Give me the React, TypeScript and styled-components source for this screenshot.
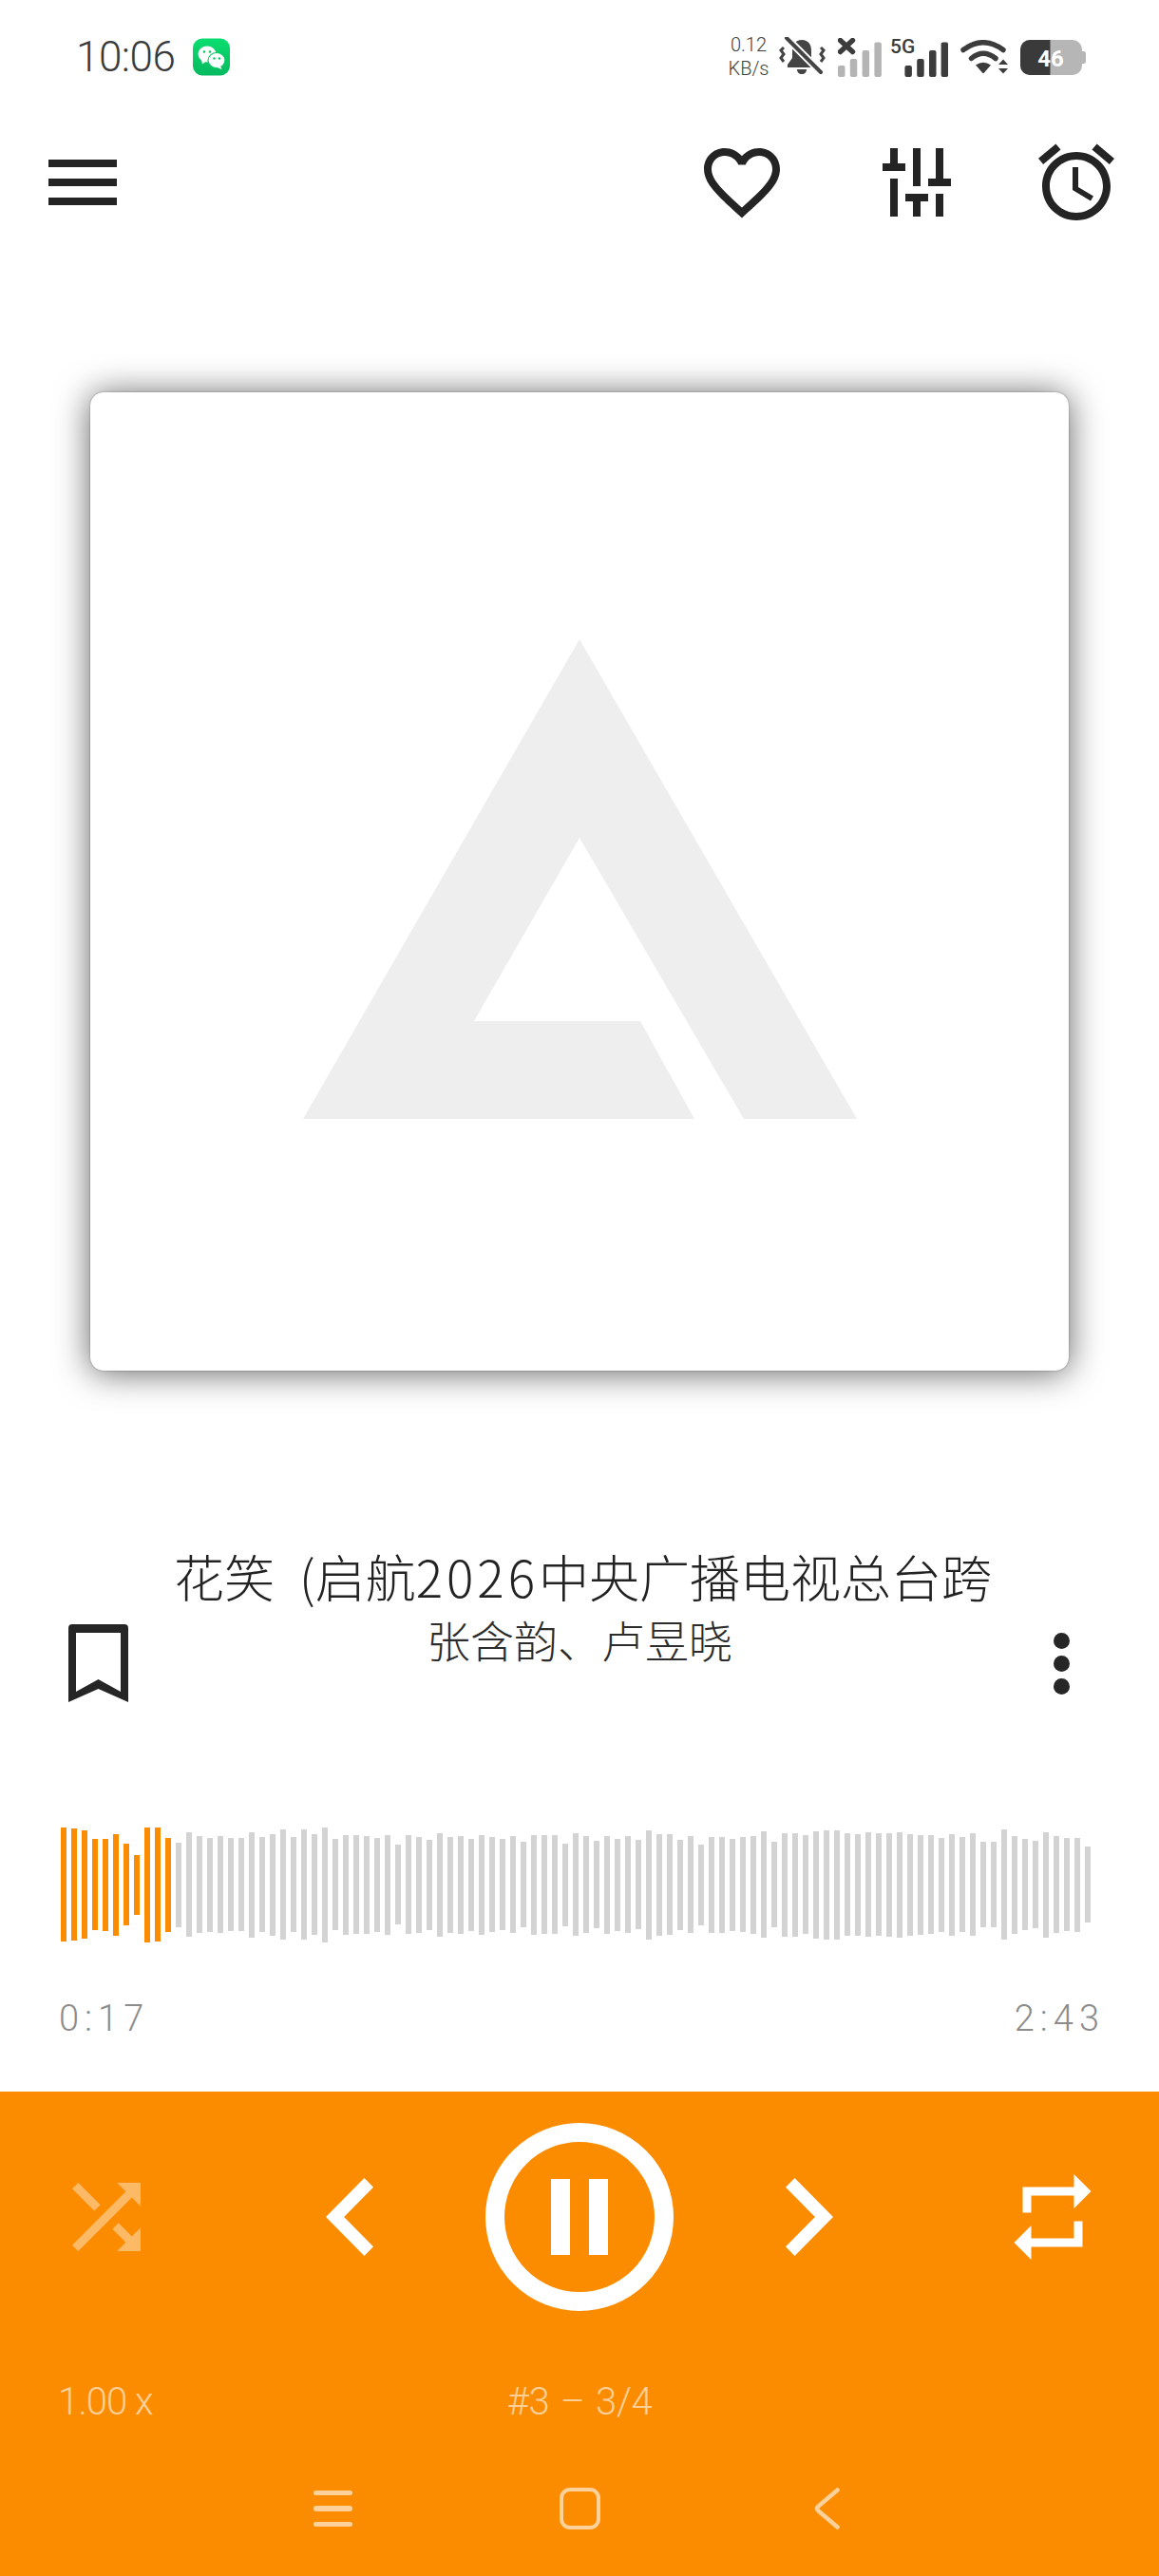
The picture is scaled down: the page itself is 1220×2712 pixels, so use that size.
import React from 'react';
import styled, { createGlobalStyle } from 'styled-components';

const GlobalStyle = createGlobalStyle`
  html, body {
    margin: 0;
    padding: 0;
    background: #fff;
  }
  body {
    font-family: Roboto, "Noto Sans CJK SC", sans-serif;
  }
`;

const Page = styled.div`
  width: 1220px;
  height: 2712px;
  overflow: hidden;
  background: #fff;
  display: flex;
  flex-direction: column;
`;

const StatusBar = styled.div`
  height: 120px;
  padding: 0 77px 0 80px;
  display: flex;
  align-items: center;
  justify-content: space-between;
`;

const StatusLeft = styled.div`
  display: flex;
  align-items: center;
  gap: 19px;
`;

const Clock = styled.span`
  font-size: 44px;
  font-weight: 300;
  letter-spacing: -0.5px;
  color: #3a3a3a;
  line-height: 1;
`;

const StatusRight = styled.div`
  display: flex;
  align-items: center;
  gap: 13px;
  height: 44px;
`;

const Speed = styled.div`
  width: 38px;
  display: flex;
  flex-direction: column;
  align-items: center;
  font-size: 20px;
  font-weight: 300;
  line-height: 25px;
  color: #3f3f3f;
  white-space: nowrap;
`;

const StatusIcon = styled.svg`
  display: block;
  flex: none;
`;

const FiveGWrap = styled.div`
  position: relative;
  width: 61px;
  height: 41px;
  margin-left: -4px;
`;

const FiveGLabel = styled.span`
  position: absolute;
  left: 0;
  top: -3px;
  font-size: 21px;
  line-height: 24px;
  font-weight: 500;
  color: #3c3c3c;
`;

const Toolbar = styled.div`
  margin-top: 24px;
  height: 96px;
  padding: 0 39px;
  display: flex;
  align-items: center;
`;

const ToolIcon = styled.svg<{ $gap?: number }>`
  display: block;
  flex: none;
  width: 96px;
  height: 96px;
  fill: #242424;
  margin-left: ${(p) => p.$gap ?? 0}px;
`;

const Spacer = styled.div`
  flex: 1;
`;

const Album = styled.div`
  margin: 173px 95px 0;
  height: 1030px;
  box-sizing: border-box;
  padding-bottom: 5px;
  background: #fff;
  border-radius: 14px;
  box-shadow: 0 0 1.5px rgba(0, 0, 0, 0.55), 0 2px 36px rgba(0, 0, 0, 0.62);
  display: flex;
  align-items: center;
  justify-content: center;
`;

const Info = styled.div`
  margin-top: 186px;
  display: grid;
  grid-template-columns: 1fr auto 1fr;
  row-gap: 21px;
`;

const Title = styled.div`
  grid-column: 1 / 4;
  text-align: center;
  padding-left: 7px;
  font-family: "Noto Sans CJK SC", sans-serif;
  font-size: 53px;
  font-weight: 300;
  line-height: 60px;
  color: #222;
  white-space: nowrap;
`;

const TitleParen = styled.span`
  margin-left: 26px;
`;

const TitleDigits = styled.span`
  letter-spacing: 4px;
`;

const Artist = styled.div`
  font-family: "Noto Sans CJK SC", sans-serif;
  font-size: 46px;
  font-weight: 300;
  line-height: 42px;
  color: #2c2c2c;
  white-space: nowrap;
  margin-top: -6px;
`;

const BookmarkCell = styled.div`
  padding-left: 72px;
`;

const BookmarkIcon = styled.svg`
  display: block;
  fill: #262626;
`;

const MoreCell = styled.div`
  display: flex;
  flex-direction: column;
  align-items: flex-end;
  gap: 7px;
  padding: 9px 94px 0 0;
`;

const Dot = styled.span`
  width: 17px;
  height: 17px;
  border-radius: 50%;
  background: #262626;
`;

const Wave = styled.div`
  margin-top: 131px;
  height: 122px;
  padding-left: 64px;
  display: flex;
  align-items: center;
  gap: 5px;
`;

const WaveBar = styled.span<{ $played: boolean }>`
  width: 6px;
  flex: none;
  background: ${(p) => (p.$played ? '#fb8c00' : '#d3d3d3')};
`;

const Times = styled.div`
  margin-top: 58px;
  height: 44px;
  padding: 0 57px 0 62px;
  display: flex;
  align-items: center;
  justify-content: space-between;
  font-size: 38px;
  font-weight: 300;
  letter-spacing: 6px;
  color: #8c8c8c;
`;

const Panel = styled.div`
  margin-top: 55px;
  flex: 1;
  background: #fb8c00;
  padding-top: 33px;
  display: flex;
  flex-direction: column;
`;

const Controls = styled.div`
  height: 198px;
  padding: 0 58px;
  display: flex;
  align-items: center;
  justify-content: space-between;
`;

const ModeIcon = styled.svg<{ $dim?: boolean }>`
  display: block;
  width: 108px;
  height: 108px;
  fill: ${(p) => (p.$dim ? 'rgba(255, 255, 255, 0.4)' : '#fff')};
`;

const Transport = styled.div`
  display: flex;
  align-items: center;
  gap: 118px;
`;

const Chevron = styled.svg`
  display: block;
  width: 50px;
  height: 82px;
  fill: #fff;
`;

const PauseRing = styled.div`
  width: 198px;
  height: 198px;
  box-sizing: border-box;
  border: 20px solid #fff;
  border-radius: 50%;
  display: flex;
  align-items: center;
  justify-content: center;
  gap: 20px;
`;

const PauseBar = styled.span`
  width: 20px;
  height: 80px;
  background: #fff;
`;

const Meta = styled.div`
  margin-top: 71px;
  height: 48px;
  padding-left: 61px;
  display: grid;
  grid-template-columns: 1fr 300px 1fr;
  align-items: center;
  margin-right: 61px;
  font-size: 40px;
  font-weight: 300;
  color: rgba(255, 255, 255, 0.6);
`;

const Speedometer = styled.span`
  letter-spacing: -1px;
  white-space: nowrap;
`;

const Position = styled.span`
  text-align: center;
  white-space: nowrap;
  word-spacing: 2px;
  letter-spacing: -0.3px;
`;

const NavBar = styled.div`
  margin-top: 67px;
  height: 44px;
  display: flex;
  justify-content: center;
`;

const NavSlot = styled.div`
  width: 260px;
  display: flex;
  align-items: center;
  justify-content: center;
`;

const NavLines = styled.div`
  width: 41px;
  display: flex;
  flex-direction: column;
  gap: 11px;
`;

const NavLine = styled.span`
  height: 5.5px;
  border-radius: 3px;
  background: rgba(255, 255, 255, 0.6);
`;

const NavSquare = styled.div`
  width: 43px;
  height: 44px;
  box-sizing: border-box;
  border: 4.5px solid rgba(255, 255, 255, 0.6);
  border-radius: 11px;
`;

const played = 11;
const bars = [
  120, 118, 114, 96, 97, 107, 86, 63, 121, 120, 99, 89, 110, 102, 99, 102, 98, 98, 111, 100,
  107, 116, 100, 116, 106, 121, 96, 105, 104, 103, 99, 105, 84, 104, 101, 95, 109, 101, 103, 97,
  105, 100, 96, 102, 90, 105, 104, 104, 87, 108, 102, 92, 103, 97, 102, 94, 115, 107, 106, 95,
  102, 85, 101, 101, 97, 100, 103, 112, 90, 109, 109, 104, 113, 115, 115, 108, 107, 110, 108, 109,
  111, 107, 105, 104, 99, 107, 100, 108, 90, 90, 116, 103, 96, 92, 111, 102, 98, 99, 80,
];

const WeChatIcon = () => (
  <StatusIcon width="39" height="46" viewBox="0 0 39 46">
    <defs>
      <linearGradient id="wechat" x1="0" y1="0" x2="0" y2="1">
        <stop offset="0" stopColor="#0ade70" />
        <stop offset="1" stopColor="#07b95f" />
      </linearGradient>
    </defs>
    <rect y="0" width="39" height="39" rx="10" fill="url(#wechat)" transform="translate(0 3.5)" />
    <g transform="translate(0 3.5)">
      <ellipse cx="15" cy="16.5" rx="9.5" ry="8.5" fill="#fff" />
      <path d="M9 22l1 5 4-3z" fill="#fff" />
      <ellipse cx="25" cy="23" rx="9" ry="8" fill="#fff" stroke="#08c866" strokeWidth="1.2" />
      <path d="M29 29l1.5 3.5-5-2z" fill="#fff" />
      <circle cx="12" cy="14" r="1.3" fill="#08c866" />
      <circle cx="18" cy="14" r="1.3" fill="#08c866" />
      <circle cx="22.5" cy="21" r="1.2" fill="#08c866" />
      <circle cx="28" cy="21" r="1.2" fill="#08c866" />
    </g>
  </StatusIcon>
);

const BellIcon = () => (
  <StatusIcon width="49" height="42" viewBox="0 0 49 42">
    <path d="M24 3c-7 0-10 5-10 11v8l-5 7v3h30v-3l-5-7v-8c0-6-3-11-10-11z" fill="#444" />
    <path d="M19 34h10c0 3-2 5-5 5s-5-2-5-5z" fill="#444" />
    <path d="M5 11l-3 3 3 4-3 4 3 4" fill="none" stroke="#444" strokeWidth="3" />
    <path d="M44 11l3 3-3 4 3 4-3 4" fill="none" stroke="#444" strokeWidth="3" />
    <path d="M8 1l36 36" stroke="#fff" strokeWidth="8" />
    <path d="M8 1l36 36" stroke="#444" strokeWidth="4" strokeLinecap="round" />
  </StatusIcon>
);

const MutedSignal = () => (
  <StatusIcon width="46" height="41" viewBox="0 0 46 41">
    <rect x="0" y="29" width="7.5" height="12" rx="2" fill="#b4b4b4" />
    <rect x="12.8" y="22" width="7.5" height="19" rx="2" fill="#b4b4b4" />
    <rect x="25.6" y="13" width="7.5" height="28" rx="2" fill="#b4b4b4" />
    <rect x="38.4" y="4.5" width="7.5" height="36.5" rx="2" fill="#b4b4b4" />
    <path d="M2.5 2.5l13 12M15.5 2.5l-13 12" stroke="#3c3c3c" strokeWidth="5.5" strokeLinecap="round" />
  </StatusIcon>
);

const FiveGSignal = () => (
  <FiveGWrap>
    <StatusIcon width="61" height="41" viewBox="0 0 61 41">
      <rect x="15.4" y="29" width="7.5" height="12" rx="2" fill="#3c3c3c" />
      <rect x="28.2" y="22" width="7.5" height="19" rx="2" fill="#3c3c3c" />
      <rect x="41" y="13" width="7.5" height="28" rx="2" fill="#3c3c3c" />
      <rect x="53.6" y="4.5" width="7.5" height="36.5" rx="2" fill="#3c3c3c" />
    </StatusIcon>
    <FiveGLabel>5G</FiveGLabel>
  </FiveGWrap>
);

const WifiIcon = () => (
  <StatusIcon width="50" height="36" viewBox="0 0 50 36">
    <path d="M3 10.5Q24-5 45 10.5" fill="none" stroke="#3c3c3c" strokeWidth="5.5" strokeLinecap="round" />
    <path d="M11.5 19.5Q24 9 37 19.5" fill="none" stroke="#3c3c3c" strokeWidth="5.5" strokeLinecap="round" />
    <path d="M16 26.5Q24 21 32 26.5L25 34.5q-1 1-2 0z" fill="#3c3c3c" />
    <path d="M45 20.5l5 5.5H40zM40 30h10l-5 5.5z" fill="#3c3c3c" />
  </StatusIcon>
);

const BatteryIcon = () => (
  <StatusIcon width="69" height="37" viewBox="0 0 69 37">
    <rect x="0" y="0" width="65" height="37" rx="10" fill="#b6b6b6" />
    <path d="M10 0H31.5V37H10A10 10 0 0 1 0 27V10A10 10 0 0 1 10 0z" fill="#3a3a3a" />
    <path d="M65 12h1.5a2.5 2.5 0 0 1 2.5 2.5v8a2.5 2.5 0 0 1-2.5 2.5H65z" fill="#b6b6b6" />
    <text x="32" y="28" textAnchor="middle" fontFamily="Roboto, sans-serif" fontSize="24" fontWeight="700" fill="#fff">46</text>
  </StatusIcon>
);

const App: React.FC = () => {
  return (
    <Page>
      <GlobalStyle />
      <StatusBar>
        <StatusLeft>
          <Clock>10:06</Clock>
          <WeChatIcon />
        </StatusLeft>
        <StatusRight>
          <Speed>
            <span>0.12</span>
            <span>KB/s</span>
          </Speed>
          <BellIcon />
          <MutedSignal />
          <FiveGSignal />
          <WifiIcon />
          <BatteryIcon />
        </StatusRight>
      </StatusBar>

      <Toolbar>
        <ToolIcon viewBox="0 0 24 24">
          <path d="M3 18h18v-2H3v2zm0-5h18v-2H3v2zm0-7v2h18V6H3z" />
        </ToolIcon>
        <Spacer />
        <ToolIcon viewBox="0 0 24 24">
          <path d="M16.5 3c-1.74 0-3.41.81-4.5 2.09C10.91 3.81 9.24 3 7.5 3 4.42 3 2 5.42 2 8.5c0 3.78 3.4 6.86 8.55 11.54L12 21.35l1.45-1.32C18.6 15.36 22 12.28 22 8.5 22 5.42 19.58 3 16.5 3zm-4.4 15.55l-.1.1-.11-.1C7.14 14.24 4 11.39 4 8.5 4 6.5 5.5 5 7.5 5c1.54 0 3.04.99 3.57 2.36h1.87C13.46 5.99 14.96 5 16.5 5c2 0 3.5 1.5 3.5 3.5 0 2.89-3.14 5.74-7.9 10.05z" />
        </ToolIcon>
        <ToolIcon viewBox="0 0 24 24" $gap={88}>
          <path d="M5 3h2v4H5zM3 7h6v2H3zM5 11h2v10H5zM11 3h2v10h-2zM9 15h6v2H9zM11 17h2v4h-2zM17 3h2v8h-2zM15 11h6v2h-6zM17 15h2v6h-2z" />
        </ToolIcon>
        <ToolIcon viewBox="0 0 24 24" $gap={72}>
          <path d="M22 5.72l-4.6-3.86-1.29 1.53 4.6 3.86L22 5.72zM7.88 3.39L6.6 1.86 2 5.71l1.29 1.53 4.59-3.85zM12.5 8H11v6l4.75 2.85.75-1.23-4-2.37V8zM12 4c-4.97 0-9 4.03-9 9s4.03 9 9 9 9-4.03 9-9-4.03-9-9-9zm0 16c-3.87 0-7-3.13-7-7s3.13-7 7-7 7 3.13 7 7-3.13 7-7 7z" />
        </ToolIcon>
      </Toolbar>

      <Album>
        <svg width="583" height="505" viewBox="0 0 583 505">
          <path d="M291 0L583 505H464L291 209L180 402H355L412 505H0z" fill="#eeeeee" />
        </svg>
      </Album>

      <Info>
        <Title>
          花笑<TitleParen>(</TitleParen>启航<TitleDigits>2026</TitleDigits>中央广播电视总台跨
        </Title>
        <BookmarkCell>
          <BookmarkIcon width="63" height="82" viewBox="0 0 63 82">
            <path fillRule="evenodd" d="M4 0H59Q63 0 63 4V82L31.5 68L0 82V4Q0 0 4 0zM8 9V71L31.5 58L55 71V9z" />
          </BookmarkIcon>
        </BookmarkCell>
        <Artist>张含韵、卢昱晓</Artist>
        <MoreCell>
          <Dot />
          <Dot />
          <Dot />
        </MoreCell>
      </Info>

      <Wave>
        {bars.map((h, i) => (
          <WaveBar key={i} $played={i < played} style={{ height: h }} />
        ))}
      </Wave>

      <Times>
        <span>0:17</span>
        <span>2:43</span>
      </Times>

      <Panel>
        <Controls>
          <ModeIcon $dim viewBox="0 0 24 24">
            <path d="M10.59 9.17L5.41 4 4 5.41l5.17 5.17 1.42-1.41zM14.5 4l2.04 2.04L4 18.59 5.41 20 17.96 7.46 20 9.5V4h-5.5zm.33 9.41l-1.41 1.41 3.13 3.13L14.5 20H20v-5.5l-2.04 2.04-3.13-3.13z" />
          </ModeIcon>
          <Transport>
            <Chevron viewBox="8 6 7.41 12" preserveAspectRatio="none">
              <path d="M15.41 7.41L14 6l-6 6 6 6 1.41-1.41L10.83 12z" />
            </Chevron>
            <PauseRing>
              <PauseBar />
              <PauseBar />
            </PauseRing>
            <Chevron viewBox="8.59 6 7.41 12" preserveAspectRatio="none">
              <path d="M10 6L8.59 7.41 13.17 12l-4.58 4.59L10 18l6-6z" />
            </Chevron>
          </Transport>
          <ModeIcon viewBox="0 0 24 24">
            <path d="M7 7h10v3l4-4-4-4v3H5v6h2V7zm10 10H7v-3l-4 4 4 4v-3h12v-6h-2v4z" />
          </ModeIcon>
        </Controls>

        <Meta>
          <Speedometer>1.00 x</Speedometer>
          <Position>#3 – 3/4</Position>
        </Meta>

        <NavBar>
          <NavSlot>
            <NavLines>
              <NavLine />
              <NavLine />
              <NavLine />
            </NavLines>
          </NavSlot>
          <NavSlot>
            <NavSquare />
          </NavSlot>
          <NavSlot>
            <svg width="27" height="44" viewBox="0 0 27 44">
              <path
                d="M24.5 2.5L4.5 19.5Q1.5 22 4.5 24.5L24.5 41.5"
                fill="none"
                stroke="rgba(255,255,255,0.6)"
                strokeWidth="4.5"
                strokeLinecap="round"
              />
            </svg>
          </NavSlot>
        </NavBar>
      </Panel>
    </Page>
  );
};

export default App;
